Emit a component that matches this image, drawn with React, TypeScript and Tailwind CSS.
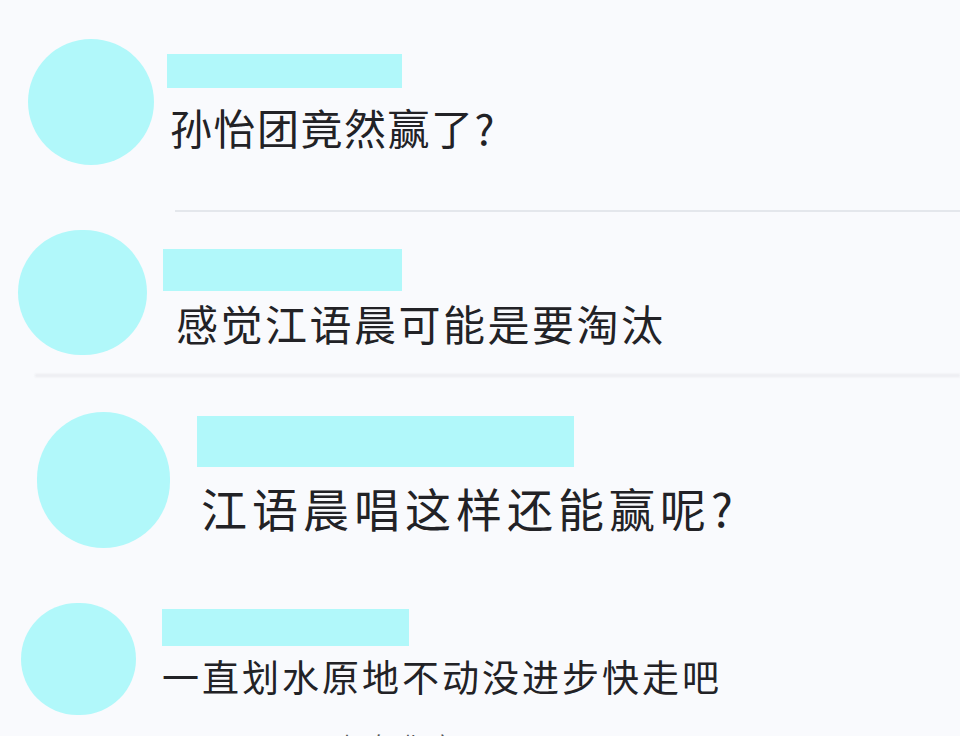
import clsx from "clsx";

type Comment = {
  text: string;
  box: string;
  avatar: string;
  gap: string;
  bar: string;
  textCls: string;
};

const COMMENTS: Comment[] = [
  {
    text: "孙怡团竟然赢了?",
    box: "h-[210px] pt-[39px] pl-[28px]",
    avatar: "w-[126px] h-[126px]",
    gap: "ml-[13px]",
    bar: "mt-[15px] w-[235px] h-[34px]",
    textCls: "mt-[18px] ml-[3px] text-[42px] tracking-[1.5px]",
  },
  {
    text: "感觉江语晨可能是要淘汰",
    box: "h-[162px] pt-[18px] pl-[18px]",
    avatar: "w-[129px] h-[125px]",
    gap: "ml-[16px]",
    bar: "mt-[19px] w-[239px] h-[42px]",
    textCls: "mt-[11px] ml-[13px] text-[42px] tracking-[2.5px]",
  },
  {
    text: "江语晨唱这样还能赢呢?",
    box: "h-[213px] pt-[35px] pl-[37px]",
    avatar: "w-[133px] h-[136px]",
    gap: "ml-[27px]",
    bar: "mt-[4px] w-[377px] h-[51px]",
    textCls: "mt-[17px] ml-[4px] text-[46px] tracking-[5px]",
  },
  {
    text: "一直划水原地不动没进步快走吧",
    box: "h-[142px] pt-[13px] pl-[21px]",
    avatar: "w-[115px] h-[112px]",
    gap: "ml-[26px]",
    bar: "mt-[6px] w-[247px] h-[37px]",
    textCls: "mt-[12px] ml-0 text-[37px] tracking-[3px]",
  },
];

function Row({ c }: { c: Comment }) {
  return (
    <div className={clsx("flex shrink-0 items-start", c.box)}>
      <div className={clsx("shrink-0 rounded-full bg-[#b1f8fa]", c.avatar)} />
      <div className={clsx("flex flex-col", c.gap)}>
        <div className={clsx("bg-[#b1f8fa]", c.bar)} />
        <div className={clsx("whitespace-nowrap leading-none text-[#222226]", c.textCls)}>{c.text}</div>
      </div>
    </div>
  );
}

export default function App() {
  return (
    <div
      className="relative flex h-[736px] w-[960px] flex-col overflow-hidden bg-[#f9fafd]"
      style={{ fontFamily: '"Noto Sans CJK SC", "Noto Sans", sans-serif' }}
    >
      <Row c={COMMENTS[0]} />
      <div className="ml-[175px] h-[2px] shrink-0 bg-[#e4e7ec]" />
      <Row c={COMMENTS[1]} />
      <div className="ml-[35px] h-[3px] shrink-0 bg-[#ebecf0] blur-[1px]" />
      <Row c={COMMENTS[2]} />
      <Row c={COMMENTS[3]} />
      <div className="shrink-0 pl-[336px] text-[22px] leading-none tracking-[10px] text-[#555]">
        来自北京
      </div>
    </div>
  );
}
